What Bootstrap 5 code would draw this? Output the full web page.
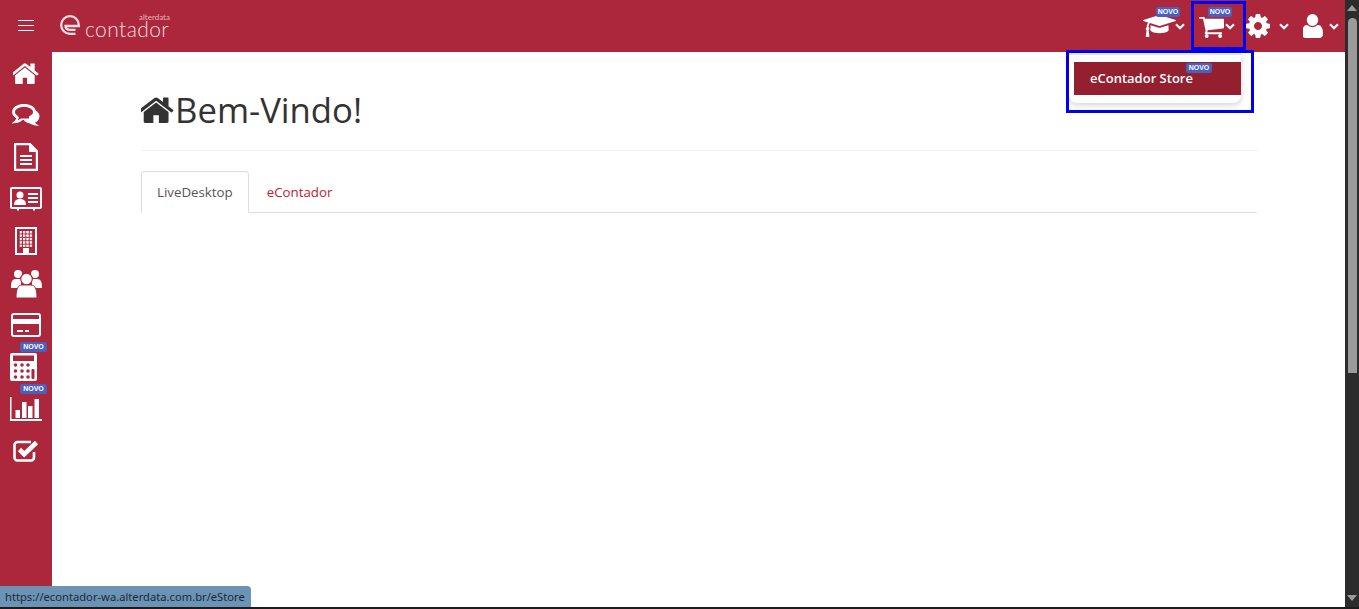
<!DOCTYPE html>
<html lang="pt-BR">
<head>
<meta charset="utf-8">
<title>eContador</title>
<link href="https://cdn.jsdelivr.net/npm/bootstrap@5.3.0/dist/css/bootstrap.min.css" rel="stylesheet">
<style>
html,body{height:100%;overflow:hidden}
body{font-family:"Open Sans",sans-serif;font-size:14px;color:#333;background:#1c1c1c}
.app-shell{height:607px}
.app-col{width:1345px}
.top-bar{height:52px;background:#ad273c;padding:0;flex-wrap:nowrap}
.burger{width:52px;height:52px;padding:0 18px 1px;border:0;background:none;display:flex;flex-direction:column;justify-content:center;gap:4px}
.burger span{display:block;width:16px;height:1px;background:#fff}
.brand{color:#f3dfe2;text-decoration:none;margin-left:8px;width:110px;height:52px;position:relative}
.brand-mark{width:20px;height:20px;margin-top:15px;flex:none}
.brand-word{font-family:"Lato",sans-serif;font-weight:300;font-size:21px;letter-spacing:.4px;line-height:14px;height:14px;margin:22px 0 0 5px;color:#f3dfe2}
.brand-sub{position:absolute;left:79px;top:14px;font-family:"Lato",sans-serif;font-size:8px;line-height:7px;color:#e0b4bc}
.tool{height:52px;position:relative;flex:none}
.tool-cap{width:54px;padding-left:6px}
.tool-cart{width:55px;padding-left:8px}
.tool-cog{width:49px}
.tool-user{width:50px;padding-left:8px}
.tool-box{position:absolute;left:0;top:1px;width:55px;height:49px;border:3px solid #0000f0}
.chev{width:10px;height:7px;flex:none}
.tag{position:absolute;background:#4d5fbd;color:#fff;font-family:"Liberation Sans",sans-serif;font-size:7px;font-weight:700;line-height:10px;height:10px;width:26px;padding:0;border-radius:2px;text-align:center}
.tag-cap{left:19px;top:7px;width:24px}
.tag-cart{left:17px;top:7px;width:24px}
.tag-side{left:20px;top:-4px;width:27px}
.tag-menu{left:112px;top:1px}
.side-bar{width:52px;background:#ad273c;flex:none}
.side-item{height:42px;position:relative;color:#fff}
.calc-icon{margin-right:5px}
.side-main{background:#fff;padding:0 88px 0 89px}
.page-title{font-size:34.7px;line-height:40px;margin:38px 0 0;color:#333;font-weight:400;height:40px}
.page-title svg{width:33px;height:26px;flex:none;margin-right:1px}
.page-rule{margin:20px 0 20px;border:0;border-top:1px solid #eee;opacity:1}
.tab-row{border-bottom:1px solid #ddd;height:42px}
.tab-row .nav-link{height:42px;padding:0 15px;line-height:41px;font-size:13.3px;border-radius:4px 4px 0 0;color:#c5202f;margin-right:2px}
.tab-row .nav-link.tab-plain{padding-left:16px;line-height:42px}
.tab-row .nav-link.active{color:#555;border-color:#ddd #ddd #fff}
.menu-wrap{position:absolute;left:1066px;top:50px;width:188px;height:63px;border:3px solid #0000f0;z-index:5;background:#fff}
.menu-panel{display:block;position:absolute;left:0;top:0;width:172px;height:50px;min-width:0;padding:7px 0 0 5px;margin:0;border:0;border-radius:0 0 8px 8px;background:#fff;box-shadow:0 2px 6px rgba(0,0,0,.18);border-top:2px solid #e3e3e3}
.menu-link{display:block;position:relative;width:167px;height:33px;padding:0 0 0 16px;line-height:32px;background:#94202f;color:#fff;font-weight:600;font-size:13px}
.menu-link:hover{background:#94202f;color:#fff}
.status-tip{position:absolute;left:0;top:586px;width:251px;height:21px;background:#6a93b6;border-radius:0 4px 0 0;color:#1f2a33;font-family:"Noto Sans",sans-serif;font-size:11.2px;line-height:21px;padding-left:5px;z-index:6;white-space:nowrap}
.scroll-rail{width:14px;background:#2c2c2c;flex:none;padding:0 2px 0 3px}
.scroll-up{width:0;height:0;border:5px solid transparent;border-top:0;border-bottom:6px solid #9b9b9b;margin:5px 0 7px -1px}
.scroll-thumb{height:355px;background:#9b9b9b;border-radius:5px 5px 0 0}
.scroll-down{width:0;height:0;border:5px solid transparent;border-bottom:0;border-top:6px solid #9b9b9b;margin:0 0 6px -1px}
</style>
</head>
<body>
<div class="app-shell d-flex">
  <div class="app-col d-flex flex-column">
    <nav class="navbar top-bar d-flex align-items-start">
      <button class="burger" aria-label="Menu"><span></span><span></span><span></span></button>
      <a class="brand d-flex" href="#">
        <svg class="brand-mark" viewBox="0 0 20 20" fill="none" stroke="#f3dfe2" stroke-width="2.300"><path d="M15.500 18.800H10A8.800 8.800 0 1 1 18.800 10V11H5.500C5.500 13 7 14.800 10 14.800H15.500"/></svg>
        <span class="brand-word">contador</span>
        <span class="brand-sub">alterdata</span>
      </a>
      <div class="ms-auto d-flex">
        <div class="tool tool-cap d-flex align-items-center">
          <svg width="33" height="26" viewBox="0 0 2304 1792" fill="#fff"><path d="M1774 836l18 316q4 69-82 128t-235 93.500-323 34.500-323-34.500-235-93.500-82-128l18-316 574 181q22 7 48 7t48-7zm530-324q0 23-22 31l-1120 352q-4 1-10 1t-10-1l-652-206q-43 34-71 111.500t-34 178.500q63 36 63 109 0 69-58 107l58 433q2 14-8 25-9 11-24 11h-192q-15 0-24-11-10-11-8-25l58-433q-58-38-58-107 0-73 65-111 11-207 98-330l-333-104q-22-8-22-31t22-31l1120-352q4-1 10-1t10 1l1120 352q22 8 22 31z"/></svg>
          <svg class="chev" style="margin-left:-1px" viewBox="0 0 10 7" fill="none" stroke="#fff" stroke-width="2.200"><path d="M1 1.200l4 4 4-4"/></svg>
          <span class="badge tag tag-cap">NOVO</span>
        </div>
        <div class="tool tool-cart d-flex align-items-center">
          <svg width="25" height="23" viewBox="64 128 1664 1536" preserveAspectRatio="none" fill="#fff"><path d="M704 1536q0 52-38 90t-90 38-90-38-38-90 38-90 90-38 90 38 38 90zm896 0q0 52-38 90t-90 38-90-38-38-90 38-90 90-38 90 38 38 90zm128-1088v512q0 24-16.500 42.500t-40.500 21.500l-1044 122q13 60 13 70 0 16-24 64h920q26 0 45 19t19 45-19 45-45 19h-1024q-26 0-45-19t-19-45q0-11 8-31.500t16-36 21.500-40 15.500-29.500l-177-823h-204q-26 0-45-19t-19-45 19-45 45-19h256q16 0 28.500 6.500t19.500 15.500 13 24.500 8 26 5.500 29.500 4.500 26h1201q26 0 45 19t19 45z"/></svg>
          <svg class="chev" style="margin-left:1px" viewBox="0 0 10 7" fill="none" stroke="#fff" stroke-width="2.200"><path d="M1 1.200l4 4 4-4"/></svg>
          <span class="badge tag tag-cart">NOVO</span>
          <span class="tool-box"></span>
        </div>
        <div class="tool tool-cog d-flex align-items-center">
          <svg width="24" height="24" viewBox="128 128 1536 1536" fill="#fff"><path d="M1152 896q0-106-75-181t-181-75-181 75-75 181 75 181 181 75 181-75 75-181zm512-109v222q0 12-8 23t-20 13l-185 28q-19 54-39 91 35 50 107 138 10 12 10 25t-9 23q-27 37-99 108t-94 71q-12 0-26-9l-138-108q-44 23-91 38-16 136-29 186-7 28-36 28h-222q-14 0-24.500-8.500t-11.500-21.500l-28-184q-49-16-90-37l-141 107q-10 9-25 9-14 0-25-11-126-114-165-168-7-10-7-23 0-12 8-23 15-21 51-66.500t54-70.500q-27-50-41-99l-183-27q-13-2-21-12.500t-8-23.500v-222q0-12 8-23t19-13l186-28q14-46 39-92-40-57-107-138-10-12-10-24 0-10 9-23 26-36 98.500-107.500t94.500-71.500q13 0 26 10l138 107q44-23 91-38 16-136 29-186 7-28 36-28h222q14 0 24.500 8.500t11.500 21.500l28 184q49 16 90 37l142-107q9-9 24-9 13 0 25 10 129 119 165 170 7 8 7 22 0 12-8 23-15 21-51 66.500t-54 70.500q26 50 41 98l183 28q13 2 21 12.500t8 23.500z"/></svg>
          <svg class="chev" style="margin-left:9px" viewBox="0 0 10 7" fill="none" stroke="#fff" stroke-width="2.200"><path d="M1 1.200l4 4 4-4"/></svg>
        </div>
        <div class="tool tool-user d-flex align-items-center">
          <svg width="20" height="24" viewBox="260 128 1340 1536" preserveAspectRatio="none" fill="#fff"><path d="M1600 1405q0 120-73 189.500t-194 69.500h-874q-121 0-194-69.500t-73-189.500q0-53 3.500-103.500t14-109 26.500-108.500 43-97.500 62-81 85.500-53.500 111.500-20q9 0 42 21.500t74.500 48 108 48 133.500 21.500 133.500-21.500 108-48 74.500-48 42-21.500q61 0 111.500 20t85.500 53.500 62 81 43 97.500 26.500 108.500 14 109 3.500 103.500zm-320-893q0 159-112.500 271.500t-271.500 112.500-271.500-112.500-112.500-271.500 112.500-271.500 271.500-112.500 271.500 112.500 112.500 271.500z"/></svg>
          <svg class="chev" style="margin-left:6px" viewBox="0 0 10 7" fill="none" stroke="#fff" stroke-width="2.200"><path d="M1 1.200l4 4 4-4"/></svg>
        </div>
      </div>
    </nav>
    <div class="d-flex flex-grow-1">
      <aside class="side-bar d-flex flex-column">
        <div class="side-item d-flex align-items-center justify-content-center">
          <svg width="26" height="21" viewBox="130 230 1532 1306" preserveAspectRatio="none" fill="#fff"><path d="M1408 992v480q0 26-19 45t-45 19h-384v-384h-256v384h-384q-26 0-45-19t-19-45v-480q0-1 .5-3t.5-3l575-474 575 474q1 2 1 6zm223-69l-62 74q-8 9-21 11h-3q-13 0-21-7l-692-577-692 577q-12 8-24 7-13-2-21-11l-62-74q-8-10-7-23.500t11-21.500l719-599q32-26 76-26t76 26l244 204v-195q0-14 9-23t23-9h192q14 0 23 9t9 23v408l219 182q10 8 11 21.500t-7 23.500z"/></svg>
        </div>
        <div class="side-item d-flex align-items-center justify-content-center">
          <svg width="28" height="22" viewBox="0 0 28 22" fill="none"><ellipse cx="19" cy="12.500" rx="8.500" ry="7" fill="#fff"/><path d="M22 17c1 2 2.500 3.500 5.500 4.500-3.500.5-7-.3-10-2.500z" fill="#fff"/><ellipse cx="12" cy="8" rx="10.500" ry="6.700" fill="#ad273c" stroke="#fff" stroke-width="2.800"/><path d="M6 13c-.5 2.200-1.500 3.800-3 5 3-.3 5.500-1.300 7.500-3.500" fill="#ad273c" stroke="#fff" stroke-width="2.200"/><path d="M5 11.500h12v3H8z" fill="#ad273c"/></svg>
        </div>
        <div class="side-item d-flex align-items-center justify-content-center">
          <svg width="24" height="28" viewBox="0 0 24 28" fill="none" stroke="#fff" stroke-width="2.200"><path d="M1.100 1.100h14.900l6.900 7v18.800H1.100z"/><path d="M15.500 1v7.500H23z" fill="#fff" stroke-width="1"/><path d="M6 13h12M6 17h12M6 21h12"/></svg>
        </div>
        <div class="side-item d-flex align-items-center justify-content-center">
          <svg width="32" height="24" viewBox="0 0 32 24" fill="none" stroke="#fff" stroke-width="2"><rect x="1" y="1" width="30" height="20" rx="1"/><path d="M8 21v2.500M24 21v2.500"/><circle cx="10" cy="8" r="3.500" fill="#fff" stroke="none"/><path d="M4 18c0-4 2-6 6-6s6 2 6 6z" fill="#fff" stroke="none"/><path d="M18 7h10M18 11h10M18 15h10"/></svg>
        </div>
        <div class="side-item d-flex align-items-center justify-content-center">
          <svg width="22" height="28" viewBox="0 0 22 28"><defs><pattern id="winGrid" x="4.500" y="4" width="3.400" height="3.400" patternUnits="userSpaceOnUse"><rect width="2.400" height="2.400" fill="#fff"/></pattern></defs><rect x="1" y="1" width="20" height="26" fill="none" stroke="#fff" stroke-width="2"/><rect x="4.500" y="4" width="13" height="16" fill="url(#winGrid)"/><rect x="8" y="21" width="6" height="6" fill="#fff"/></svg>
        </div>
        <div class="side-item d-flex align-items-center justify-content-center">
          <svg width="31" height="29" viewBox="0 0 31 29" fill="#fff"><circle cx="7" cy="5" r="4"/><circle cx="24" cy="5" r="4"/><path d="M0 19c0-6 1-9 5-9h5v9zM31 19c0-6-1-9-5-9h-5v9z"/><circle cx="15.500" cy="10" r="5.800" fill="#fff" stroke="#ad273c" stroke-width="1.200"/><path d="M5 29c0-9 2-13 6-13h9c4 0 6 4 6 13z" stroke="#ad273c" stroke-width="1"/></svg>
        </div>
        <div class="side-item d-flex align-items-center justify-content-center">
          <svg width="30" height="24" viewBox="0 0 30 24" fill="none" stroke="#fff" stroke-width="2"><rect x="1" y="1" width="28" height="22" rx="2"/><path d="M1 8.500h28" stroke-width="5"/><path d="M6 18h6M14 18h4"/></svg>
        </div>
        <div class="side-item d-flex align-items-center justify-content-center">
          <svg class="calc-icon" width="27" height="28" viewBox="0 0 27 28" fill="#fff"><rect x="0" y="0" width="27" height="28" rx="2"/><rect x="3" y="2.500" width="21" height="5.500" fill="#ad273c"/><g fill="#ad273c"><circle cx="5.500" cy="12" r="1.800"/><circle cx="12" cy="12" r="1.800"/><circle cx="18" cy="12" r="1.800"/><circle cx="5.500" cy="18" r="1.800"/><circle cx="12" cy="18" r="1.800"/><circle cx="18" cy="18" r="1.800"/><circle cx="5.500" cy="24" r="1.800"/><circle cx="12" cy="24" r="1.800"/><circle cx="18" cy="24" r="1.800"/><rect x="21.500" y="16" width="3" height="10" rx="1"/></g></svg>
          <span class="badge tag tag-side">NOVO</span>
        </div>
        <div class="side-item d-flex align-items-center justify-content-center">
          <svg width="32" height="24" viewBox="0 0 32 24" fill="#fff"><path d="M0 0h1.500v22H32v2H0z"/><rect x="5.500" y="13" width="4.500" height="8"/><rect x="12" y="5" width="4.500" height="16"/><rect x="18" y="9" width="4.500" height="12"/><rect x="24.500" y="2" width="4.500" height="19"/></svg>
          <span class="badge tag tag-side">NOVO</span>
        </div>
        <div class="side-item d-flex align-items-center justify-content-center">
          <svg width="26" height="22" viewBox="0 0 26 22" fill="none"><path d="M21 12v5.500a3 3 0 0 1-3 3H4.500a3 3 0 0 1-3-3V5a3 3 0 0 1 3-3H18" stroke="#fff" stroke-width="2.600"/><path d="M6.500 9.500l4.700 4.700L23.500 2.500" stroke="#fff" stroke-width="4.600"/></svg>
        </div>
      </aside>
      <main class="side-main flex-grow-1">
        <h1 class="page-title d-flex align-items-center"><svg viewBox="130 230 1532 1306" preserveAspectRatio="none" fill="#333"><path d="M1408 992v480q0 26-19 45t-45 19h-384v-384h-256v384h-384q-26 0-45-19t-19-45v-480q0-1 .5-3t.5-3l575-474 575 474q1 2 1 6zm223-69l-62 74q-8 9-21 11h-3q-13 0-21-7l-692-577-692 577q-12 8-24 7-13-2-21-11l-62-74q-8-10-7-23.500t11-21.500l719-599q32-26 76-26t76 26l244 204v-195q0-14 9-23t23-9h192q14 0 23 9t9 23v408l219 182q10 8 11 21.500t-7 23.500z"/></svg>Bem-Vindo!</h1>
        <hr class="page-rule">
        <ul class="nav nav-tabs tab-row">
          <li class="nav-item"><a class="nav-link active" href="#">LiveDesktop</a></li>
          <li class="nav-item"><a class="nav-link tab-plain border-0" href="#">eContador</a></li>
        </ul>
      </main>
    </div>
  </div>
  <div class="scroll-rail d-flex flex-column">
    <div class="scroll-up"></div>
    <div class="scroll-thumb"></div>
    <div class="scroll-down mt-auto"></div>
  </div>
</div>
<div class="menu-wrap">
  <div class="dropdown-menu menu-panel">
    <a class="dropdown-item menu-link" href="#">eContador Store<span class="badge tag tag-menu">NOVO</span></a>
  </div>
</div>
<div class="status-tip">https://econtador-wa.alterdata.com.br/eStore</div>
<script src="https://cdn.jsdelivr.net/npm/bootstrap@5.3.0/dist/js/bootstrap.bundle.min.js"></script>
</body>
</html>
